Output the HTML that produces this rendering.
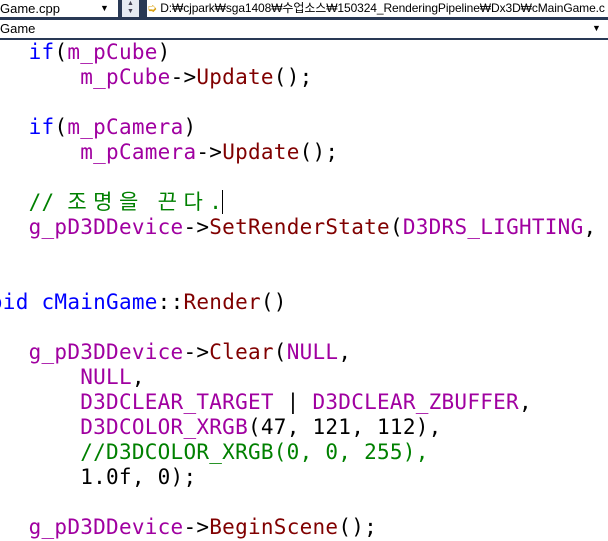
<!DOCTYPE html>
<html><head><meta charset="utf-8"><style>
body{margin:0;width:608px;height:541px;overflow:hidden;background:#fff;position:relative;font-family:"Liberation Sans","Noto Sans CJK KR",sans-serif}
.bar{position:absolute;left:0;top:0;width:608px;height:40px;background:#293955}
.box{position:absolute;background:#fff;font-size:13px;line-height:17px;color:#000;white-space:nowrap;overflow:hidden}
pre{position:absolute;left:-23px;top:40px;margin:0;font-family:"DejaVu Sans Mono","Noto Sans CJK KR",monospace;font-size:21px;line-height:25px;letter-spacing:0.26px;color:#000}
.k{color:#0000ff}.m{color:#a000a0}.f{color:#800000}.c{color:#008000}
.w{display:inline-block;width:25.8px;text-align:left}
</style></head><body>
<div class="bar"></div>
<div class="box" style="left:0;top:0;width:118px;height:17px">Game.cpp<span style="position:absolute;left:100px;top:0;font-size:9px">▼</span></div>
<div class="box" style="left:122px;top:0;width:17px;height:17px;background:#e6ebf3;font-size:7px;line-height:8px;text-align:center;color:#445">▲<br>▼</div>
<div class="box" style="left:147px;top:0;width:461px;height:17px;font-size:12px;letter-spacing:-0.1px"><span style="color:#d9a010">➭</span> D:₩cjpark₩sga1408₩수업소스₩150324_RenderingPipeline₩Dx3D₩cMainGame.c</div>
<div class="box" style="left:0;top:20px;width:608px;height:18px">Game<span style="position:absolute;left:592px;top:0;font-size:9px">▼</span></div>
<pre>    <span class="k">if</span>(<span class="m">m_pCube</span>)
        <span class="m">m_pCube</span>-&gt;<span class="f">Update</span>();

    <span class="k">if</span>(<span class="m">m_pCamera</span>)
        <span class="m">m_pCamera</span>-&gt;<span class="f">Update</span>();

    <span class="c">// <span class="w">조</span><span class="w">명</span><span class="w">을</span> <span class="w">끈</span><span class="w">다</span>.</span><span style="border-left:1px solid #000"></span>
    <span class="m">g_pD3DDevice</span>-&gt;<span class="f">SetRenderState</span>(<span class="m">D3DRS_LIGHTING</span>, 


<span class="k">void</span> <span class="k">cMainGame</span>::<span class="f">Render</span>()

    <span class="m">g_pD3DDevice</span>-&gt;<span class="f">Clear</span>(<span class="m">NULL</span>,
        <span class="m">NULL</span>,
        <span class="m">D3DCLEAR_TARGET</span> | <span class="m">D3DCLEAR_ZBUFFER</span>,
        <span class="m">D3DCOLOR_XRGB</span>(47, 121, 112),
        <span class="c">//D3DCOLOR_XRGB(0, 0, 255),</span>
        1.0f, 0);

    <span class="m">g_pD3DDevice</span>-&gt;<span class="f">BeginScene</span>();</pre>
</body></html>
